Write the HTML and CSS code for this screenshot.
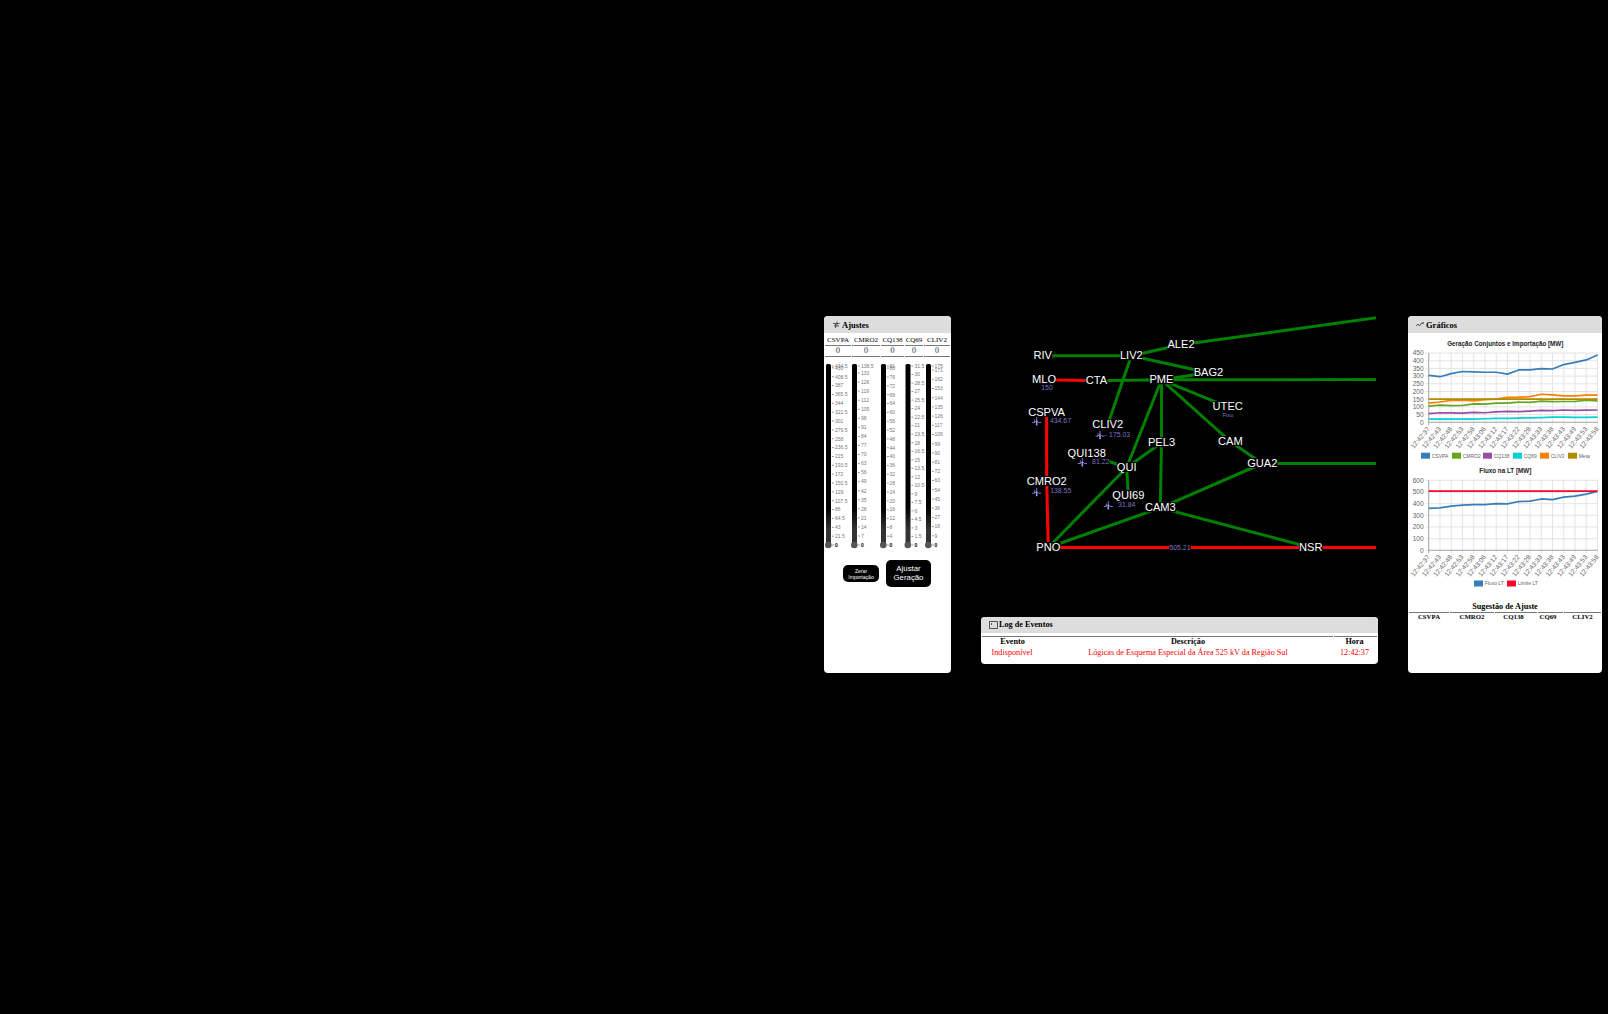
FILE: index.html
```html
<!DOCTYPE html>
<html lang="pt-BR">
<head>
<meta charset="utf-8">
<title>Ajustes de Geração</title>
<link rel="stylesheet" href="styles.css">
</head>
<body>
<main class="board">
  <section class="panel adjust">
    <h2 class="head"><svg class="hicon" viewBox="0 0 8 8"><path d="M1 2.500h6.500M2 5h5M5 .5v4M3.500 3v4"/></svg>Ajustes</h2>
    <div class="cols names"><span>CSVPA</span><span>CMRO2</span><span>CQ138</span><span>CQ69</span><span>CLIV2</span></div>
    <div class="cols values"><span>0</span><span>0</span><span>0</span><span>0</span><span>0</span></div>
    <svg class="sliders" id="sliders" viewBox="824 357 127 198"></svg>
    <div class="buttons">
      <button class="btn small">Zerar<br>Importação</button>
      <button class="btn large">Ajustar<br>Geração</button>
    </div>
  </section>

  <div class="center">
    <svg class="grid-map" id="map" viewBox="981 316 397 301"></svg>
    <section class="panel log">
      <h2 class="head"><svg class="hicon log-icon" viewBox="0 0 9 8"><path d="M.5 .5h8v7h-8zM2 2.2l1 .8-1 .8"/></svg>Log de Eventos</h2>
      <div class="log-row log-head"><span>Evento</span><span>Descrição</span><span class="hour">Hora</span></div>
      <div class="log-row alarm"><span>Indisponível</span><span>Lógicas de Esquema Especial da Área 525 kV da Região Sul</span><span class="hour">12:42:37</span></div>
    </section>
  </div>

  <section class="panel charts">
    <h2 class="head"><svg class="hicon" viewBox="0 0 8 8"><path d="M0 5l2-2 1.5 2L6 1.500l.8 1.500L8 1"/></svg>Gráficos</h2>
    <svg class="chart-a" id="chartA" viewBox="1408 333 194 130"></svg>
    <svg class="chart-b" id="chartB" viewBox="1408 463 194 138"></svg>
    <h3 class="sub">Sugestão de Ajuste</h3>
    <div class="sug"><span>CSVPA</span><span>CMRO2</span><span class="lean">CQ138</span><span class="lean">CQ69</span><span>CLIV2</span></div>
  </section>
</main>
<script src="app.js"></script>
</body>
</html>
```
FILE: styles.css
```css
* { box-sizing: border-box; }
body { margin: 0; background: #000; height: 1014px; overflow: hidden; font-family: "Liberation Serif", "Times New Roman", serif; font-size: 8px; color: #000; }
svg { display: block; }
.board { display: flex; gap: 30px; align-items: flex-start; padding: 316px 0 0 824px; }
.panel { background: #fff; border-radius: 4px; overflow: hidden; }
.adjust { width: 127px; height: 357px; flex: none; }
.center { width: 397px; flex: none; }
.charts { width: 194px; height: 357px; flex: none; }
.head { margin: 0; height: 17px; background: #ddd; display: flex; align-items: center; gap: 2px; padding: 1px 0 0 8px; font-size: 8.5px; font-weight: bold; line-height: 1; }
.hicon { width: 8px; height: 8px; fill: none; stroke: #333; stroke-width: .8; }
.log .head { height: 16px; font-size: 8.2px; gap: 1px; }
.log .log-icon { width: 9px; height: 8px; margin-top: -2px; }

.cols { display: grid; grid-template-columns: 26px 28px 23px 18px 26px; column-gap: 1px; padding-left: 1px; text-align: center; }
.cols span { border-bottom: 1px solid #777; display: flex; justify-content: center; align-items: center; line-height: 1; white-space: nowrap; }
.names { height: 13px; font-size: 7px; padding-top: 2px; }
.values { height: 11px; font-size: 8px; color: #234; }
.sliders { width: 127px; height: 198px; }
.tick { font: 5px "Liberation Sans", Arial, sans-serif; fill: #777; }
.tick.zero { fill: #000; font-weight: bold; }
.dash { stroke: #777; stroke-width: .8; }
.thumb { fill: #555; }

.buttons { display: flex; align-items: center; gap: 7px; padding: 5px 0 0 19px; }
.btn { border: 0; padding: 0; background: #000; color: #fff; border-radius: 5px; font-family: "Liberation Sans", Arial, sans-serif; text-align: center; }
.btn.small { width: 36px; height: 17px; font-size: 5.1px; line-height: 6px; }
.btn.large { width: 45px; height: 27px; font-size: 7.8px; line-height: 8.500px; }

.grid-map { width: 397px; height: 301px; font-family: "Liberation Sans", Arial, sans-serif; }
.edge { stroke: #008000; stroke-width: 3; }
.edge.over { stroke: #f00; }
.mask { fill: #000; }
.node { font-size: 11.1px; fill: #fff; text-anchor: middle; }
.reading { font-size: 6.9px; fill: #7c74c4; text-anchor: middle; }
.turbine { stroke: #9c94f4; stroke-width: .8; fill: none; }
.mast { fill: #9c94f4; }

.log { height: 47px; }
.log-row { display: grid; grid-template-columns: 60px 290px 43px; column-gap: 1px; padding: 0 1px; height: 11px; line-height: 9px; text-align: center; white-space: nowrap; }
.log-head { margin-top: 3px; font-weight: bold; font-size: 8.2px; }
.log-head span { border-top: 1px solid #777; }
.log-head span:first-child { margin-right: -1px; }
.hour { padding-right: 2px; }
.alarm { color: #f00; padding-top: 1px; font-size: 8.2px; }

.chart-a { width: 194px; height: 130px; }
.chart-b { width: 194px; height: 138px; }
.charts svg { font-family: "Liberation Sans", Arial, sans-serif; }
.title { font-size: 6.3px; font-weight: bold; fill: #222; text-anchor: middle; }
.gridline { stroke: #ddd; stroke-width: .8; }
.axis { stroke: #aaa; stroke-width: 1; }
.label { font-size: 6.6px; fill: #666; text-anchor: end; }
.legend { font-size: 5px; fill: #666; }
.series { fill: none; stroke-width: 1.7; stroke-linejoin: round; }
.sub { margin: 0; height: 11px; font-size: 8.2px; line-height: 12px; text-align: center; }
.sug { display: grid; grid-template-columns: 40px 44px 42px 25px 37px; column-gap: 1px; padding: 0 1px; font-size: 6.8px; font-weight: bold; text-align: center; line-height: 8px; }
.sug span { border-top: 1px solid #777; }
.sug .lean { padding-right: 5px; }
```
FILE: app.js
```js
const NS = 'http://www.w3.org/2000/svg';
function add(parent, tag, attrs, text) {
  const el = document.createElementNS(NS, tag);
  for (const k in attrs) el.setAttribute(k, attrs[k]);
  if (text !== undefined) el.textContent = text;
  parent.appendChild(el);
  return el;
}

// Vertical sliders: track x, dash x, label x, maximum, step
const sliders = document.getElementById('sliders');
const defs = add(sliders, 'defs', {});
const grad = add(defs, 'linearGradient', { id: 'track', x1: 0, y1: 0, x2: 0, y2: 1 });
add(grad, 'stop', { offset: '.8', 'stop-color': '#000' });
add(grad, 'stop', { offset: '.92', 'stop-color': '#333' });
[
  [826, 832, 835, 434.5, 21.5], [852, 858, 861, 138.5, 7],
  [881, 887, 889.5, 81, 4], [905.5, 911.5, 914.5, 31.5, 1.5], [926, 932, 934.5, 175, 9]
].forEach(([x, dash, tx, max, step]) => {
  add(sliders, 'rect', { x, y: 364, width: 5, height: 180, rx: 1.5, fill: 'url(#track)' });
  add(sliders, 'circle', { cx: x + 2.3, cy: 545, r: 3.3, class: 'thumb' });
  const values = [];
  for (let v = 0; v < max; v += step) values.push(v);
  values.push(max);
  values.forEach(v => {
    const y = 545 - v / max * 179;
    add(sliders, 'line', { x1: dash, x2: dash + 1.8, y1: y, y2: y, class: 'dash' });
    add(sliders, 'text', { x: tx, y: y + 1.8, class: v ? 'tick' : 'tick zero' }, String(v));
  });
});

// Network map
const map = document.getElementById('map');
const nodes = {
  RIV: [1042.7, 355.3], LIV2: [1131.3, 355.3], ALE2: [1181, 344.3], MLO: [1044, 379.3], CTA: [1096.5, 380.3],
  PME: [1161.5, 379.3], BAG2: [1208.5, 372.3], CSPVA: [1046.6, 412], CLIV2: [1107.7, 424.3], PEL3: [1161.5, 442.3],
  QUI138: [1086.7, 453.3], QUI: [1126.7, 467], QUI69: [1128.3, 495], CMRO2: [1046.7, 481], CAM3: [1160.3, 507.3],
  PNO: [1048.3, 547], NSR: [1310.7, 547], UTEC: [1227.7, 406.3], CAM: [1230.3, 441], GUA2: [1262.3, 463],
  outA: [1376, 317.2], outB: [1376, 379], outC: [1376, 463], outD: [1376, 547]
};
const edges = 'RIV-LIV2 LIV2-ALE2 ALE2-outA LIV2-BAG2 LIV2-CLIV2 CTA-PME PME-BAG2 PME-outB PME-UTEC PME-CAM CAM-GUA2 GUA2-outC PME-PEL3 PEL3-CAM3 PME-QUI QUI-PEL3 QUI138-QUI QUI-QUI69 PNO-QUI PNO-CAM3 CAM3-GUA2 CAM3-NSR';
const overloaded = 'MLO-CTA CSPVA-CMRO2 CMRO2-PNO PNO-NSR NSR-outD';
const drawEdges = (list, cls) => list.split(' ').forEach(e => {
  const [a, b] = e.split('-').map(n => nodes[n]);
  add(map, 'line', { x1: a[0], y1: a[1] + .5, x2: b[0], y2: b[1] + .5, class: cls });
});
drawEdges(edges, 'edge');
drawEdges(overloaded, 'edge over');
function label(x, y, text, cls, half) {
  const t = add(map, 'text', { x, y: y + half * .78, class: cls }, text);
  const w = t.getBBox().width;
  map.insertBefore(add(map, 'rect', { x: x - w / 2, y: y - half, width: w, height: half * 2, class: 'mask' }), t);
}
[[1047, 387.7, '150'], [1060.5, 420.7, '434.67'], [1117.5, 434.5, '- 175.03'], [1100.7, 461.3, '81.22'],
 [1126.7, 504.7, '31.84'], [1060.7, 491, '138.55'], [1180, 547.3, '505.21']
].forEach(([x, y, t]) => label(x, y, t, 'reading', 3));
add(map, 'text', { x: 1228, y: 416.8, class: 'reading', style: 'font-size:5.8px' }, 'Fixo');
for (const n in nodes) if (!n.startsWith('out')) label(nodes[n][0], nodes[n][1], n, 'node', 5);
[[1036.7, 421], [1100, 434.7], [1082.3, 462], [1108.3, 505], [1036.7, 491.7]].forEach(([x, y]) => {
  add(map, 'path', { d: `M${x} ${y - 4}v4M${x - 4.5} ${y + 1.5}h2.5l2-2 2 2h2.5M${x - 2} ${y - 1.5}v3`, class: 'turbine' });
  add(map, 'rect', { x: x - .8, y, width: 1.6, height: 4.5, class: 'mast' });
});

// Line charts
const times = ['12:42:37', '12:42:43', '12:42:48', '12:42:53', '12:42:58', '12:43:06', '12:43:12', '12:43:17',
  '12:43:22', '12:43:28', '12:43:33', '12:43:38', '12:43:43', '12:43:49', '12:43:53', '12:43:58'];
const left = 1428.7, right = 1597.5;
function chart(id, title, titleY, top, bottom, max, step, series, legendY) {
  const svg = document.getElementById(id);
  const px = i => left + (right - left) * i / 15;
  const py = v => bottom - (bottom - top) * v / max;
  add(svg, 'text', { x: 1505.3, y: titleY, class: 'title' }, title);
  for (let v = 0; v <= max; v += step) {
    add(svg, 'line', { x1: left - 3, x2: right, y1: py(v), y2: py(v), class: 'gridline' });
    add(svg, 'text', { x: left - 5, y: py(v) + 2.3, class: 'label' }, v);
  }
  times.forEach((t, i) => {
    add(svg, 'line', { x1: px(i), x2: px(i), y1: top, y2: bottom + 3, class: 'gridline' });
    add(svg, 'text', { class: 'label', transform: `translate(${px(i) + 1.5} ${bottom + 7}) rotate(-50)` }, t);
  });
  add(svg, 'path', { d: `M${left} ${top}V${bottom + 3}M${left} ${bottom}H${right}`, class: 'axis', fill: 'none' });
  series.forEach(s => {
    add(svg, 'polyline', { points: s.data.map((v, i) => px(i) + ',' + py(v)).join(' '), stroke: s.color, class: 'series' });
    add(svg, 'rect', { x: s.x, y: legendY - 3, width: 9, height: 6, fill: s.color });
    add(svg, 'text', { x: s.x + 10.7, y: legendY + 1.8, class: 'legend' }, s.name);
  });
}
chart('chartA', 'Geração Conjuntos e Importação [MW]', 345.5, 353, 422.3, 450, 50, [
  { name: 'CSVPA', x: 1421, color: '#377eb8', data: [305,296,316,330,327,325,325,313,340,340,348,346,375,389,405,437] },
  { name: 'CMRO2', x: 1452, color: '#66a61e', data: [105,112,108,109,120,118,124,125,131,130,137,134,135,135,144,139] },
  { name: 'CQ138', x: 1483, color: '#984ea3', data: [56,62,61,60,64,62,68,71,69,73,77,76,80,78,79,80] },
  { name: 'CQ69', x: 1513, color: '#00d2d5', data: [21,21,20,20,21,23,25,26,27,29,31,33,33,32,32,33] },
  { name: 'CLIV2', x: 1540, color: '#ff7f00', data: [125,132,142,144,139,147,150,162,163,167,182,178,171,172,177,176] },
  { name: 'Meta', x: 1568, color: '#af8d00', data: Array(16).fill(150) }
], 455.7);
chart('chartB', 'Fluxo na LT [MW]', 473.3, 480.3, 550.3, 600, 100, [
  { name: 'Fluxo LT', x: 1474, color: '#377eb8', data: [360,363,378,387,391,392,400,398,418,422,440,435,456,465,482,505] },
  { name: 'Limite LT', x: 1507, color: '#ff0029', data: Array(16).fill(507) }
], 583.5);
```
